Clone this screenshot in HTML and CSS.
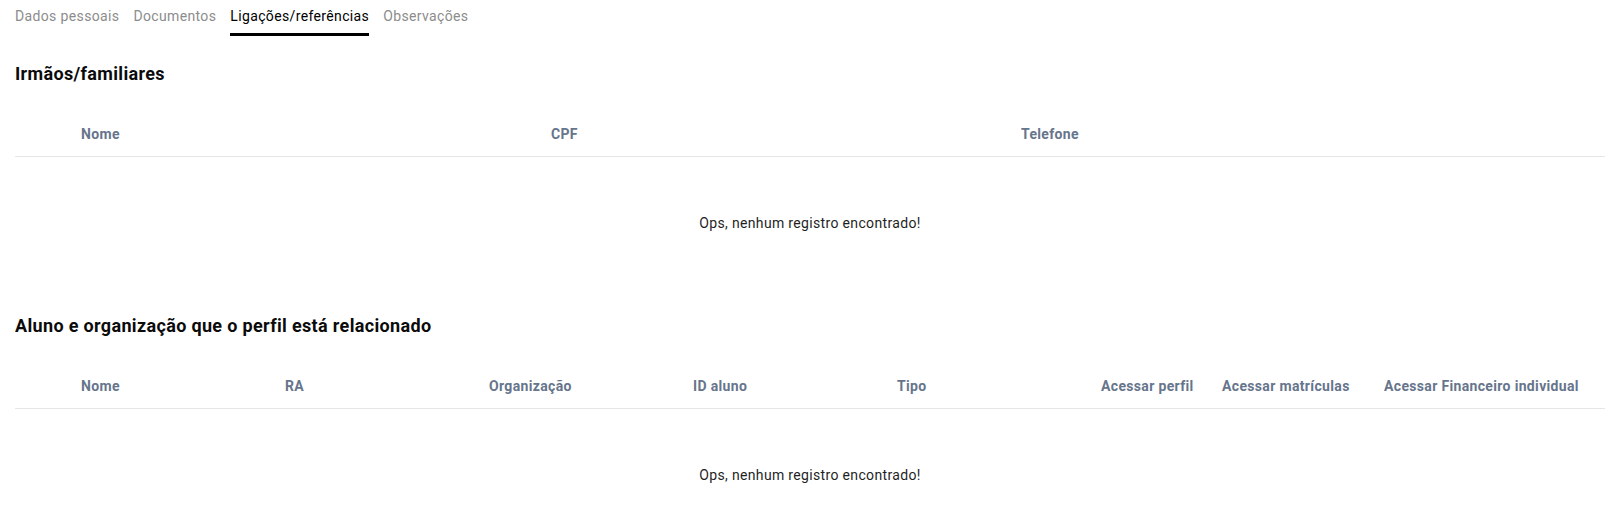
FILE: index.html
```html
<!DOCTYPE html>
<html lang="pt-BR">
<head>
<meta charset="utf-8">
<title>Ligações/referências</title>
<link rel="stylesheet" href="styles.css">
</head>
<body>
<div class="page">
  <nav class="tabs">
    <span class="tab">Dados pessoais</span>
    <span class="tab">Documentos</span>
    <span class="tab active">Ligações/referências</span>
    <span class="tab">Observações</span>
  </nav>

  <section class="section">
    <h2 class="title">Irmãos/familiares</h2>
    <div class="table">
      <div class="thead cols-1">
        <div class="th"></div>
        <div class="th">Nome</div>
        <div class="th">CPF</div>
        <div class="th">Telefone</div>
        <div class="th"></div>
      </div>
      <div class="empty">Ops, nenhum registro encontrado!</div>
    </div>
  </section>

  <section class="section second">
    <h2 class="title">Aluno e organização que o perfil está relacionado</h2>
    <div class="table">
      <div class="thead cols-2">
        <div class="th"></div>
        <div class="th">Nome</div>
        <div class="th">RA</div>
        <div class="th">Organização</div>
        <div class="th">ID aluno</div>
        <div class="th">Tipo</div>
        <div class="th">Acessar perfil</div>
        <div class="th">Acessar matrículas</div>
        <div class="th">Acessar Financeiro individual</div>
      </div>
      <div class="empty">Ops, nenhum registro encontrado!</div>
    </div>
  </section>
</div>
</body>
</html>
```

FILE: styles.css
```css
* { box-sizing: border-box; }

html, body {
  margin: 0;
  padding: 0;
  background: #ffffff;
}

body {
  font-family: Roboto, "Liberation Sans", Arial, sans-serif;
  color: #111111;
  letter-spacing: 0.34px;
}

.page {
  padding: 0 14px 0 15px;
}

.tabs {
  display: flex;
  gap: 14px;
}

.tab {
  font-size: 14px;
  line-height: 20px;
  padding: 6px 0 7px;
  border-bottom: 3px solid transparent;
  color: #8c8c8c;
  white-space: nowrap;
  letter-spacing: 0.36px;
}

.tab.active {
  color: #000000;
  border-bottom-color: #000000;
}

.title {
  margin: 26px 0 0;
  font-size: 18px;
  line-height: 24px;
  font-weight: 700;
  color: #0b0b0b;
}

.second .title {
  margin-top: 25px;
}

.table {
  margin-top: 26px;
}

.thead {
  display: grid;
  border-bottom: 1px solid #e6e6e9;
}

.cols-1 {
  grid-template-columns: 50px 470px 470px 470px 1fr;
}

.cols-2 {
  grid-template-columns: 50px 204px 204px 204px 204px 204px 121px 162px 1fr;
}

.th {
  padding: 12px 0 12px 16px;
  font-size: 14px;
  line-height: 20px;
  font-weight: 700;
  color: #66758c;
  white-space: nowrap;
}

.empty {
  padding: 56px 0;
  text-align: center;
  font-size: 14px;
  line-height: 20px;
  color: #1f1f1f;
}
```
